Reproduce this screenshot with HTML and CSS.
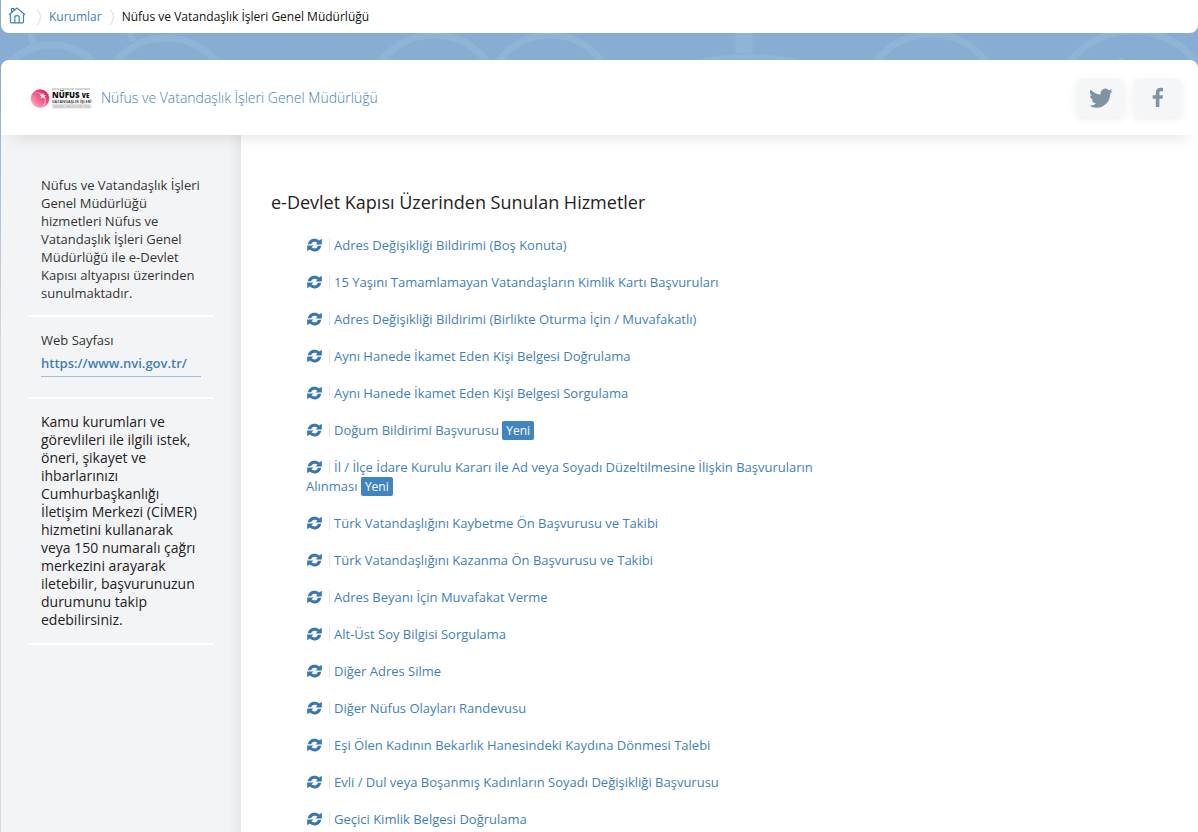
FILE: index.html
```
<!DOCTYPE html>
<html lang="tr">
<head>
<meta charset="utf-8">
<title>Nüfus ve Vatandaşlık İşleri Genel Müdürlüğü</title>
<link rel="stylesheet" href="styles.css">
</head>
<body>
<svg class="defs" aria-hidden="true">
  <symbol id="refresh" viewBox="0 0 16 14">
    <path d="M.8 6.300C1.500 2.300 4.500.2 8 .2c2 0 3.700.6 5 1.900L15.800.3v6.200H9l2.100-2C10.200 3.600 9.200 3.400 8 3.400 6 3.400 5 4.500 4.500 6.300z"/>
    <path d="M15.200 7.700C14.500 11.700 11.500 13.800 8 13.800c-2 0-3.700-.6-5-1.900L.2 13.700V7.500H7l-2.100 2c.9.900 1.900 1.100 3.100 1.100 2 0 3-1.100 3.500-2.900z"/>
  </symbol>
</svg>
<nav class="crumbs" aria-label="Sayfa yolu">
  <a href="#" aria-label="Ana Sayfa"><svg class="home" viewBox="0 0 18 18"><path d="M2.500 6.500V14q0 .8.800.8h11.400q.8 0 .8-.8V6.500M1 6.800 9 .1l8 6.700M3.500 4V.5h2.300v2M6.800 14.500v-5q0-1.800 2.200-1.800t2.200 1.800v5"/></svg></a>
  <svg class="sep" viewBox="0 0 6 18"><path d="M1 1q7 8 0 16"/></svg>
  <a href="#">Kurumlar</a>
  <svg class="sep" viewBox="0 0 6 18"><path d="M1 1q7 8 0 16"/></svg>
  <span>Nüfus ve Vatandaşlık İşleri Genel Müdürlüğü</span>
</nav>
<div class="band">
  <svg class="pattern" viewBox="0 0 1198 27" preserveAspectRatio="xMinYMin slice" aria-hidden="true">
    <circle cx="51" cy="70" r="58"/><circle cx="165" cy="70" r="65"/>
    <path d="M30 0l3 13M129 0l3 8"/>
    <circle cx="433" cy="68" r="66"/><circle cx="549" cy="65" r="63"/>
    <path class="post" d="M743 0v20"/><ellipse cx="747" cy="63" rx="90" ry="39"/>
    <circle cx="930" cy="69" r="68"/><circle cx="1132" cy="78" r="80"/><circle class="dot" cx="1120" cy="27" r="3"/>
  </svg>
</div>
<header class="head">
  <svg class="logo" viewBox="0 0 60 22" aria-hidden="true">
    <defs><linearGradient id="pink" x1="1" y1="0" x2="0" y2="1"><stop offset="0" stop-color="#f4003f"/><stop offset=".5" stop-color="#f85a83"/><stop offset="1" stop-color="#fcc5d3"/></linearGradient></defs>
    <circle cx="9" cy="11.500" r="9.300" fill="url(#pink)"/>
    <path d="M2 5Q12 4 15 12q1 5-4 8 6-8-1-12-4-3-8-3z" fill="#fff" opacity=".55"/>
    <path d="m12 6 1 2h2l-1.500 1.500.5 2-2-1-2 1 .5-2L9 8h2z" fill="#fff"/>
    <path d="M21 2h22" stroke="#999" stroke-dasharray="2 .5"/><path d="M44 2h15" stroke="#aaa"/>
    <path d="M21 16.500h38v5H21z" fill="#e3e3e3"/>
    <text x="21" y="10.500" class="logo-a">NÜFUS <tspan class="logo-s">VE</tspan></text>
    <text x="21" y="15.500" class="logo-b">VATANDAŞLIK İŞLERİ</text>
    <text x="22" y="20.500" class="logo-c">GENEL MÜDÜRLÜĞÜ</text>
  </svg>
  <a href="#" class="title">Nüfus ve Vatandaşlık İşleri Genel Müdürlüğü</a>
  <a href="#" class="social" aria-label="Twitter"><svg viewBox="0 0 24 24"><path d="M23.600 4.800c-.9.400-1.800.6-2.700.8 1-.6 1.700-1.500 2.100-2.600-.9.500-2 .9-3.100 1.200a4.800 4.800 0 0 0-8.200 4.400C7.700 8.400 4.100 6.500 1.700 3.500a4.900 4.900 0 0 0 1.500 6.400c-.8 0-1.500-.2-2.200-.6 0 2.300 1.600 4.400 3.900 4.900-.7.200-1.500.2-2.200.1.600 1.900 2.400 3.300 4.500 3.300A9.700 9.700 0 0 1 .1 19.600a13.600 13.600 0 0 0 7.400 2.200c9.100 0 14-7.500 13.700-14.300 1-.7 1.800-1.600 2.400-2.700z"/></svg></a>
  <a href="#" class="social" aria-label="Facebook"><svg viewBox="0 0 24 24"><path d="M17 2.100V5.200h-1.900c-1.500 0-1.700.7-1.700 1.700V9.200H17l-.5 3.500h-3.100V21H9.800v-8.300H6.700V9.200h3.100V6.500c0-3 1.900-4.700 4.600-4.700 1.300 0 2.300.1 2.600.3z"/></svg></a>
</header>
<div class="layout">
  <aside class="side">
    <section><p>Nüfus ve Vatandaşlık İşleri Genel Müdürlüğü hizmetleri Nüfus ve Vatandaşlık İşleri Genel Müdürlüğü ile e-Devlet Kapısı altyapısı üzerinden sunulmaktadır.</p></section>
    <section class="web"><p>Web Sayfası</p><a href="#">https://www.nvi.gov.tr/</a></section>
    <section class="note"><p>Kamu kurumları ve görevlileri ile ilgili istek, öneri, şikayet ve ihbarlarınızı Cumhurbaşkanlığı İletişim Merkezi (CİMER) hizmetini kullanarak veya 150 numaralı çağrı merkezini arayarak iletebilir, başvurunuzun durumunu takip edebilirsiniz.</p></section>
  </aside>
  <main class="main">
    <h1>e-Devlet Kapısı Üzerinden Sunulan Hizmetler</h1>
    <ul class="services">
      <li><a href="#"><svg><use href="#refresh"/></svg>Adres Değişikliği Bildirimi (Boş Konuta)</a></li>
      <li><a href="#"><svg><use href="#refresh"/></svg>15 Yaşını Tamamlamayan Vatandaşların Kimlik Kartı Başvuruları</a></li>
      <li><a href="#"><svg><use href="#refresh"/></svg>Adres Değişikliği Bildirimi (Birlikte Oturma İçin / Muvafakatlı)</a></li>
      <li><a href="#"><svg><use href="#refresh"/></svg>Aynı Hanede İkamet Eden Kişi Belgesi Doğrulama</a></li>
      <li><a href="#"><svg><use href="#refresh"/></svg>Aynı Hanede İkamet Eden Kişi Belgesi Sorgulama</a></li>
      <li><a href="#"><svg><use href="#refresh"/></svg>Doğum Bildirimi Başvurusu <em>Yeni</em></a></li>
      <li><a href="#"><svg><use href="#refresh"/></svg>İl / İlçe İdare Kurulu Kararı ile Ad veya Soyadı Düzeltilmesine İlişkin Başvuruların Alınması <em>Yeni</em></a></li>
      <li><a href="#"><svg><use href="#refresh"/></svg>Türk Vatandaşlığını Kaybetme Ön Başvurusu ve Takibi</a></li>
      <li><a href="#"><svg><use href="#refresh"/></svg>Türk Vatandaşlığını Kazanma Ön Başvurusu ve Takibi</a></li>
      <li><a href="#"><svg><use href="#refresh"/></svg>Adres Beyanı İçin Muvafakat Verme</a></li>
      <li><a href="#"><svg><use href="#refresh"/></svg>Alt-Üst Soy Bilgisi Sorgulama</a></li>
      <li><a href="#"><svg><use href="#refresh"/></svg>Diğer Adres Silme</a></li>
      <li><a href="#"><svg><use href="#refresh"/></svg>Diğer Nüfus Olayları Randevusu</a></li>
      <li><a href="#"><svg><use href="#refresh"/></svg>Eşi Ölen Kadının Bekarlık Hanesindeki Kaydına Dönmesi Talebi</a></li>
      <li><a href="#"><svg><use href="#refresh"/></svg>Evli / Dul veya Boşanmış Kadınların Soyadı Değişikliği Başvurusu</a></li>
      <li><a href="#"><svg><use href="#refresh"/></svg>Geçici Kimlik Belgesi Doğrulama</a></li>
    </ul>
  </main>
</div>
</body>
</html>
```
FILE: styles.css
```
* { box-sizing: border-box; }
html { height: 100%; overflow: hidden; }
body {
  height: 100%;
  margin: 0;
  padding-left: 1px;
  display: flex;
  flex-direction: column;
  overflow: hidden;
  font: 13px/18px "Open Sans", sans-serif;
  color: #333;
  background: linear-gradient(#87add2 0, #87add2 60px, #d3d8df 340px, #d8dadf 100%);
}
a { color: #3f7fb8; text-decoration: none; }
p { margin: 0; }
.defs { display: none; }
.crumbs {
  flex: none;
  display: flex;
  align-items: center;
  gap: 7px;
  height: 33px;
  padding: 1px 7px 0;
  font-size: 12px;
  color: #111;
  background: #fff;
  border-radius: 0 0 8px 8px;
}
.crumbs a { display: block; }
.crumbs svg { display: block; fill: none; overflow: visible; }
.home { width: 18px; height: 18px; stroke: #4080b8; stroke-width: 1.2; margin-right: 3px; }
.sep { width: 6px; height: 18px; stroke: #dcdcdc; }
.band { flex: none; height: 27px; overflow: hidden; }
.pattern { display: block; width: 100%; height: 27px; fill: none; stroke: #8fb5d6; stroke-width: 7; }
.pattern .post { stroke-width: 17; }
.pattern .dot { fill: #8fb5d6; stroke: none; }
.head {
  flex: none;
  position: relative;
  z-index: 1;
  display: flex;
  align-items: center;
  height: 75px;
  padding: 0 17px 0 30px;
  background: #fff;
  border-radius: 8px 8px 0 0;
  box-shadow: 0 14px 16px -12px rgba(0, 0, 0, .12);
}
.logo { width: 60px; height: 22px; margin-right: 10px; overflow: visible; }
.logo text { font-family: "Open Sans", sans-serif; font-weight: 800; fill: #111; }
.logo .logo-a { font-size: 8px; }
.logo .logo-s { font-size: 6px; }
.logo .logo-b { font-size: 4px; font-weight: 600; }
.logo .logo-c { font-size: 4px; font-weight: 400; fill: #aaa; }
.title { margin-right: auto; padding-top: 1px; font-size: 14px; font-weight: 300; }
.social {
  display: flex;
  align-items: center;
  justify-content: center;
  width: 47px;
  height: 38px;
  margin-left: 10px;
  background: #f5f6f8;
  border-radius: 4px;
  box-shadow: 0 2px 8px rgba(0, 0, 0, .08);
}
.social svg { width: 24px; height: 24px; fill: #8093a2; }
.layout { flex: 1; min-height: 0; display: flex; }
.side {
  flex: none;
  width: 240px;
  padding: 41px 27px 0;
  background: linear-gradient(90deg, transparent 228px, rgba(0, 0, 0, .05)), #f3f4f6;
}
.side section { padding: 0 13px 13px; border-bottom: 2px solid #fff; }
.side .web { padding: 14px 13px 20px; }
.web a { display: block; margin-top: 4px; padding-bottom: 3px; line-height: 20px; font-weight: 600; border-bottom: 1px solid #9bc0df; }
.side .note { padding: 14px 13px; font-size: 14px; font-weight: 500; color: #222; }
.main { flex: 1; min-width: 0; padding: 54px 30px 0; background: #fff; }
h1 { margin: 0; font-size: 18px; line-height: 26px; font-weight: 500; color: #222; }
.services { width: 560px; margin: 21px 0 0; padding: 0 0 0 35px; list-style: none; }
.services li { margin-bottom: 18px; line-height: 19px; }
.services svg { width: 24px; height: 14px; margin-right: 4px; padding: 0 7px 0 1px; vertical-align: -2px; fill: #3a76b0; border-right: 1px solid #e2e8ee; }
.services em { display: inline-block; padding: 0 4px; font-size: 12px; font-style: normal; font-weight: 500; line-height: 19px; color: #fff; background: #4184c0; border-radius: 2px; }
```
